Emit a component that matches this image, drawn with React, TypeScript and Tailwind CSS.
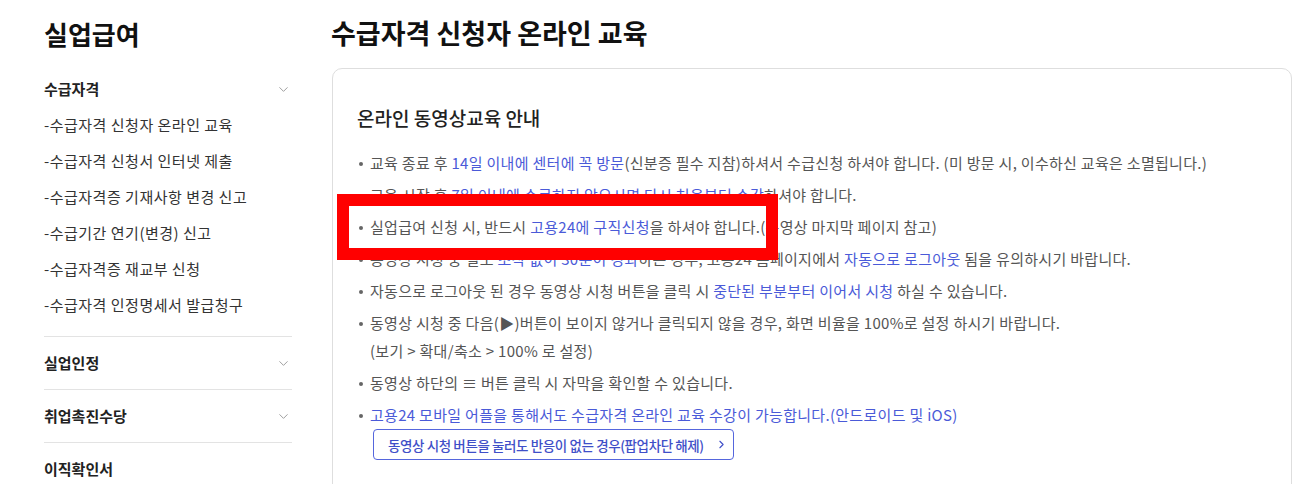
import { ChevronDown, ChevronRight } from "lucide-react";

const FONT = { fontFamily: '"Noto Sans CJK KR", "Noto Sans", sans-serif' };

const SUB_ITEMS = [
  "수급자격 신청자 온라인 교육",
  "수급자격 신청서 인터넷 제출",
  "수급자격증 기재사항 변경 신고",
  "수급기간 연기(변경) 신고",
  "수급자격증 재교부 신청",
  "수급자격 인정명세서 발급청구",
];

const SECTIONS = [
  { label: "실업인정", chevron: true },
  { label: "취업촉진수당", chevron: true },
  { label: "이직확인서", chevron: false },
];

function B({ children }: { children: React.ReactNode }) {
  return <span className="text-[#4a5ad8]">{children}</span>;
}

function Bullet({ children }: { children: React.ReactNode }) {
  return (
    <li className="flex mb-1 leading-[28px]">
      <span className="w-[13px] shrink-0 flex pt-[13px] pl-[2px]">
        <span className="block h-[4px] w-[4px] rounded-full bg-[#666]" />
      </span>
      <div>{children}</div>
    </li>
  );
}

function Sidebar() {
  return (
    <aside className="w-[248px] shrink-0">
      <h1 className="h-[66px] flex items-center text-[26px] font-bold text-[#111]">실업급여</h1>
      <div className="pt-[5px] pb-[13px]">
        <div className="h-9 flex items-center justify-between">
          <span className="text-[15px] font-bold text-[#222]">수급자격</span>
          <ChevronDown className="h-[15px] w-[15px] mr-[1px] text-[#999]" strokeWidth={1.5} />
        </div>
        {SUB_ITEMS.map((item) => (
          <div key={item} className="h-9 flex items-center text-[15px] tracking-[0.5px] text-[#333]">
            -{item}
          </div>
        ))}
      </div>
      {SECTIONS.map((s) => (
        <div
          key={s.label}
          className="h-[53px] border-t border-[#e3e3e3] flex items-center justify-between"
        >
          <span className="text-[15px] font-bold text-[#222]">{s.label}</span>
          {s.chevron && (
            <ChevronDown className="h-[15px] w-[15px] mr-[1px] text-[#999]" strokeWidth={1.5} />
          )}
        </div>
      ))}
    </aside>
  );
}

export default function App() {
  return (
    <div className="relative w-[1312px] h-[484px] overflow-hidden bg-white" style={FONT}>
      <div className="flex pl-[44px] gap-[40px]">
        <Sidebar />
        <main className="w-[960px] shrink-0">
          <h2 className="h-[66px] flex items-center text-[27px] font-bold text-[#111] -ml-[1px]">
            수급자격 신청자 온라인 교육
          </h2>
          <section className="mt-[2px] border border-[#dedede] rounded-[10px] pl-[24px] pr-6 pt-[35px] pb-10">
            <h3 className="text-[19px] leading-[28px] font-medium text-[#222]">
              온라인 동영상교육 안내
            </h3>
            <ul className="mt-[17px] text-[15px] tracking-[0.3px] text-[#555]">
              <Bullet>
                교육 종료 후 <B>14일 이내에 센터에 꼭 방문</B>(신분증 필수 지참)하셔서 수급신청 하셔야
                합니다. (미 방문 시, 이수하신 교육은 소멸됩니다.)
              </Bullet>
              <Bullet>
                교육 시작 후 <B>7일 이내에 수료하지 않으시면 다시 처음부터 수강</B>하셔야 합니다.
              </Bullet>
              <Bullet>
                실업급여 신청 시, 반드시 <B>고용24에 구직신청</B>을 하셔야 합니다.(동영상 마지막 페이지
                참고)
              </Bullet>
              <Bullet>
                동영상 시청 중 별도 <B>조작 없이 30분이 경과</B>하는 경우, 고용24 홈페이지에서{" "}
                <B>자동으로 로그아웃</B> 됨을 유의하시기 바랍니다.
              </Bullet>
              <Bullet>
                자동으로 로그아웃 된 경우 동영상 시청 버튼을 클릭 시 <B>중단된 부분부터 이어서 시청</B>{" "}
                하실 수 있습니다.
              </Bullet>
              <Bullet>
                동영상 시청 중 다음(▶)버튼이 보이지 않거나 클릭되지 않을 경우, 화면 비율을 100%로 설정
                하시기 바랍니다.
                <br />
                (보기 &gt; 확대/축소 &gt; 100% 로 설정)
              </Bullet>
              <Bullet>동영상 하단의 ≡ 버튼 클릭 시 자막을 확인할 수 있습니다.</Bullet>
              <Bullet>
                <B>고용24 모바일 어플을 통해서도 수급자격 온라인 교육 수강이 가능합니다.(안드로이드 및 iOS)</B>
                <button className="ml-[3px] flex h-[31px] w-[361px] items-center gap-[11px] whitespace-nowrap rounded-[4px] border border-[#5566dd] pl-[14px] text-[13.5px] tracking-[-0.4px] font-medium text-[#3f4fc8]">
                  동영상 시청 버튼을 눌러도 반응이 없는 경우(팝업차단 해제)
                  <ChevronRight className="h-[13px] w-[13px]" strokeWidth={2} />
                </button>
              </Bullet>
            </ul>
          </section>
        </main>
      </div>
      <div className="absolute left-[337px] top-[194px] w-[441px] h-[66px] border-[12px] border-[#ff0000]" />
    </div>
  );
}
